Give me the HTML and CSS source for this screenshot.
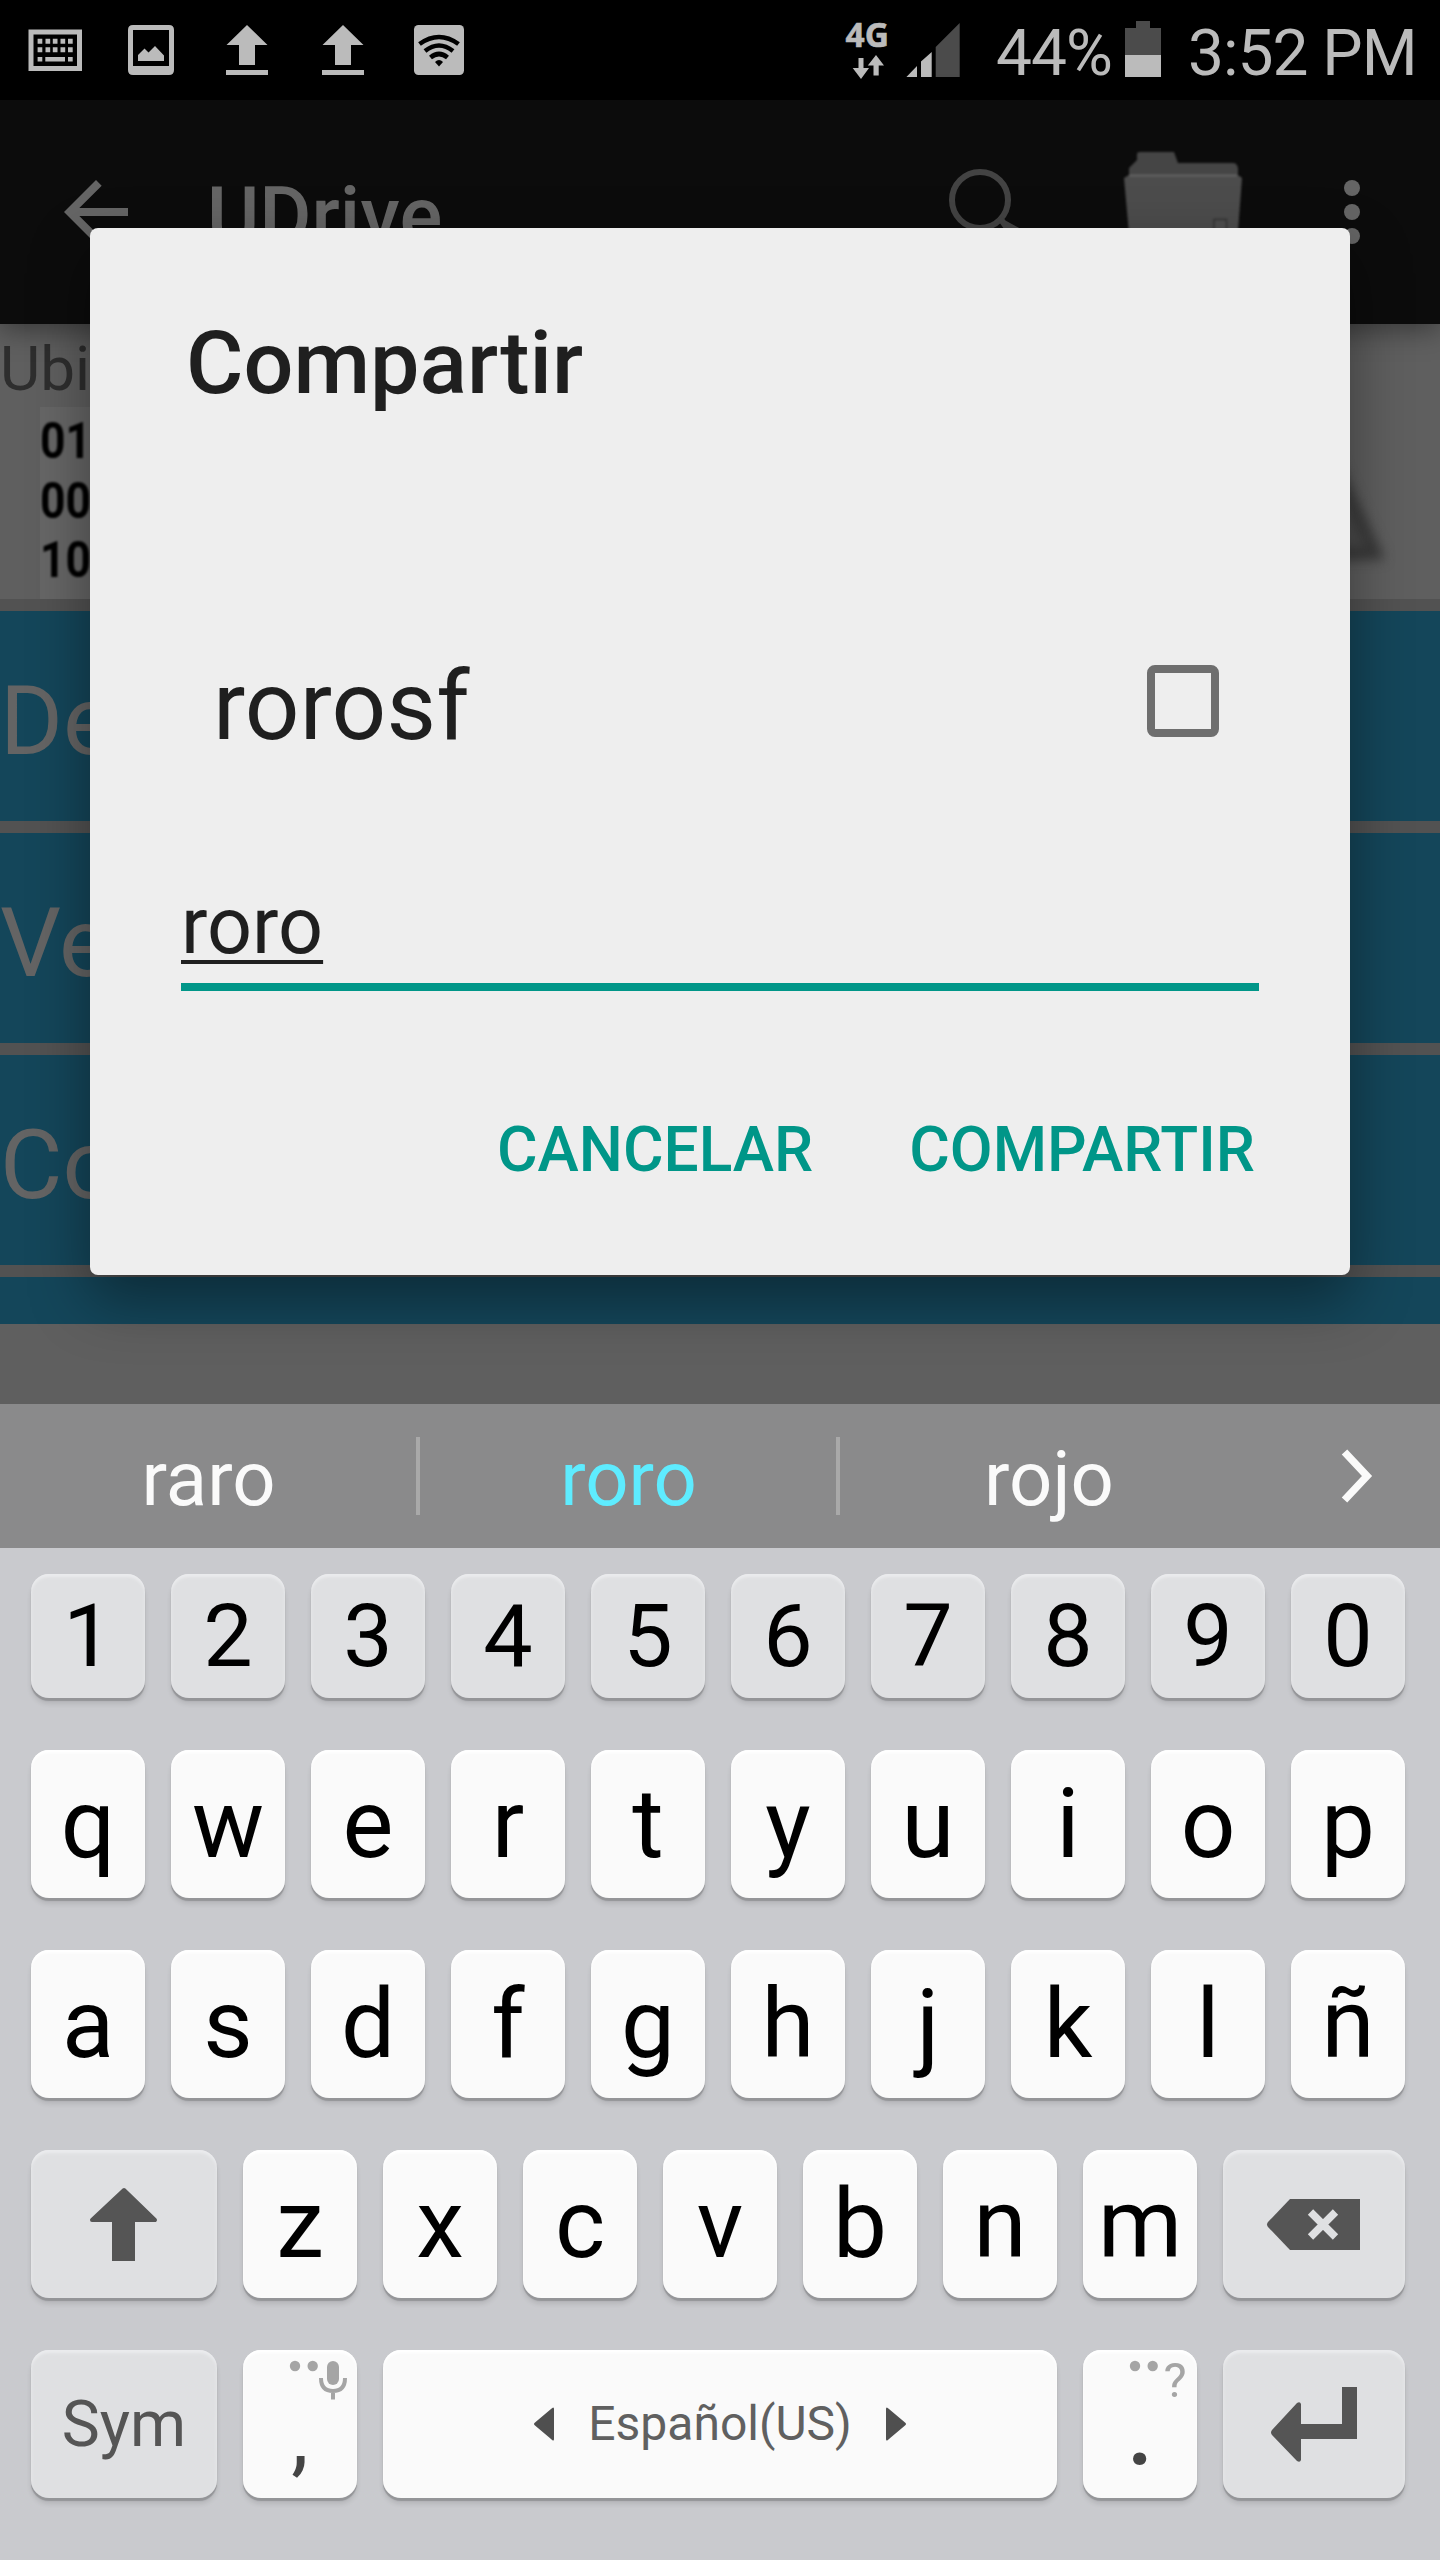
FILE: index.html
```html
<!DOCTYPE html>
<html lang="es">
<head>
<meta charset="utf-8">
<title>UDrive</title>
<link rel="stylesheet" href="styles.css">
</head>
<body>
<div class="screen">
  <header class="status">
    <div class="status-left">
      <svg class="status-icon" viewBox="-48 0 96 100">
        <path fill-rule="evenodd" d="M-26.500 29.500H27V71H-26.500ZM-21.500 34.500V66H22V34.500Z"/>
        <path d="M-17.400 38.700h4.700v5h-4.700zM-9.500 38.700h4.700v5h-4.700zM-2.200 38.700h4.700v5h-4.700zM5.500 38.700h4.700v5h-4.700zM13 38.700h4.700v5h-4.700zM-17.400 47.300h4.700v5h-4.700zM-9.500 47.300h4.700v5h-4.700zM-2.200 47.300h4.700v5h-4.700zM5.500 47.300h4.700v5h-4.700zM13 47.300h4.700v5h-4.700zM-17.400 57h4.700v4.600h-4.700zM-9.700 57H10v4.600H-9.700zM13 57h4.700v4.600h-4.700z"/>
      </svg>
      <svg class="status-icon" viewBox="-48 0 96 100">
        <path fill-rule="evenodd" d="M-18 25H18Q23 25 23 30V70Q23 75 18 75H-18Q-23 75-23 70V30Q-23 25-18 25ZM-18 30V66H18V30Z"/>
        <path d="M-13 61V55L-6.500 48.500-2.500 52.500 4 46 13 55.500V61Z"/>
      </svg>
      <svg class="status-icon" viewBox="-48 0 96 100"><path d="M0 25 20.500 45H8V65H-8V45H-20.500ZM-21 70H21V75H-21Z"/></svg>
      <svg class="status-icon" viewBox="-48 0 96 100"><path d="M0 25 20.500 45H8V65H-8V45H-20.500ZM-21 70H21V75H-21Z"/></svg>
      <svg class="status-icon" viewBox="-48 0 96 100">
        <rect x="-25" y="25" width="50" height="50" rx="4.500"/>
        <g class="wifi-arcs"><path d="M-19.500 44Q0 30 19.500 44"/><path d="M-14 51Q0 40 14 51"/><path d="M-8.500 57.500Q0 50.500 8.500 57.500"/></g>
        <path class="wifi-dot" d="M-4 62Q0 58 4 62L0 66.500Z"/>
      </svg>
    </div>
    <div class="status-right">
      <svg class="network" viewBox="840 0 125 100">
        <text x="845.500" y="47.300">4G</text>
        <path d="M858.500 58h5v10h5.500L861 79 852.700 68h5.800zM876 55l8 10.500h-5.300V75.500h-5.200V65.500h-5.700z"/>
        <path d="M917 66V77H906.400ZM931.700 52V77H921V61.500Z"/>
        <path class="dim" d="M959.700 23V77H935.700V47Z"/>
      </svg>
      <span class="percent">44%</span>
      <svg class="battery" viewBox="1125 0 36 100"><path class="dim" d="M1136 21h14v7h11v27h-36V28h11z"/><path d="M1125 55h36v22h-36z"/></svg>
      <span class="clock">3:52 PM</span>
    </div>
  </header>

  <main class="app">
    <div class="appbar">
      <svg class="back" viewBox="0 0 24 24"><path d="M20 11H7.830l5.590-5.590L12 4l-8 8 8 8 1.410-1.410L7.830 13H20z"/></svg>
      <h1 class="app-title">UDrive</h1>
      <svg class="search" viewBox="940 140 90 110"><circle cx="980" cy="200" r="28"/><path d="M1000 218 1007 228M1004 223 1022 233"/></svg>
      <svg class="folder" viewBox="1114 140 140 110">
        <path class="folder-back" d="M1129 177V168L1137 160V154Q1137 152 1140 152H1174L1178 163H1233Q1237 163 1238 168V177Z"/>
        <path d="M1129 175H1238L1242 178 1237 245H1130L1124 178Z"/>
        <path class="folder-edge" d="M1129 175.500H1237"/>
        <path class="folder-tag" d="M1214 240V219.500H1226.500V240"/>
      </svg>
      <svg class="more" viewBox="1342 140 20 110"><circle cx="1352" cy="188" r="8"/><circle cx="1352" cy="212" r="8"/><circle cx="1352" cy="236" r="8"/></svg>
    </div>
    <section class="location">
      <p class="location-label">Ubi</p>
      <div class="thumbs">
        <div class="binary"><span>01</span><span>00</span><span>10</span></div>
        <svg class="triangle" viewBox="1283 407 100 192"><path d="M1318 430 1376 554H1260Z"/></svg>
      </div>
    </section>
    <ul class="menu">
      <li>De</li>
      <li>Ve</li>
      <li>Co</li>
      <li class="cut"></li>
    </ul>
  </main>

  <section class="dialog">
    <h2 class="dialog-title">Compartir</h2>
    <label class="option"><span>rorosf</span><i class="checkbox"></i></label>
    <div class="field"><span>roro</span></div>
    <div class="actions"><button>CANCELAR</button><button>COMPARTIR</button></div>
  </section>

  <section class="keyboard">
    <div class="suggestions">
      <span>raro</span><span class="picked">roro</span><span>rojo</span>
      <svg class="chevron" viewBox="1332 1440 48 72"><path d="M1345.500 1452 1368 1476 1345.500 1500"/></svg>
    </div>
    <div class="keys">
      <div class="row numbers"><b>1</b><b>2</b><b>3</b><b>4</b><b>5</b><b>6</b><b>7</b><b>8</b><b>9</b><b>0</b></div>
      <div class="row"><b>q</b><b>w</b><b>e</b><b>r</b><b>t</b><b>y</b><b>u</b><b>i</b><b>o</b><b>p</b></div>
      <div class="row"><b>a</b><b>s</b><b>d</b><b>f</b><b>g</b><b>h</b><b>j</b><b>k</b><b>l</b><b>ñ</b></div>
      <div class="row">
        <b class="fn wide"><svg class="key-art wide-art" viewBox="31 2150 186 148"><path stroke-width="4" stroke-linejoin="round" d="M124 2190 155 2220H92Z"/><path d="M112 2218H135V2261H112Z"/></svg></b>
        <b>z</b><b>x</b><b>c</b><b>v</b><b>b</b><b>n</b><b>m</b>
        <b class="fn"><svg class="key-art" viewBox="1223 2150 182 148"><path d="M1290 2199H1360V2250H1290L1268 2227Q1266 2224.500 1268 2222Z"/><path class="cross" d="M1310.500 2212 1335.500 2237M1335.500 2212 1310.500 2237"/></svg></b>
      </div>
      <div class="row">
        <b class="fn wide sym">Sym</b>
        <b class="punct">,<svg class="hint" viewBox="243 2350 114 60"><circle cx="295" cy="2366" r="5.200"/><circle cx="312.700" cy="2366" r="5.200"/><rect x="327" y="2361" width="12" height="24" rx="6"/><path class="mic-cup" d="M321 2378Q321 2391 333 2391T345 2378M333 2391V2399.500"/></svg></b>
        <b class="space"><svg class="arrow" viewBox="0 0 22 34"><path d="M21 2V32Q21 35 18 32L2 18.500Q0 17 2 15.500L18 2Q21-1 21 2Z"/></svg><span>Español(US)</span><svg class="arrow" viewBox="0 0 22 34"><path d="M1 2V32Q1 35 4 32L20 18.500Q22 17 20 15.500L4 2Q1-1 1 2Z"/></svg></b>
        <b class="punct stop">.<svg class="hint" viewBox="1083 2350 114 60"><circle cx="1135" cy="2366" r="5.200"/><circle cx="1152.700" cy="2366" r="5.200"/><text x="1163.500" y="2396.500">?</text></svg></b>
        <b class="fn"><svg class="key-art" viewBox="1223 2350 182 148"><path d="M1342 2387H1357V2439H1301V2460Q1300 2463 1297 2461L1272 2435Q1270 2432.500 1272 2430L1297 2403Q1300 2401 1301 2404V2424H1342Z"/></svg></b>
      </div>
    </div>
  </section>
</div>
</body>
</html>
```
FILE: styles.css
```css
* { box-sizing: border-box; margin: 0; padding: 0; }
body { background: #000; font-family: Roboto, "Liberation Sans", sans-serif; }
svg { display: block; flex: none; }
.screen { position: relative; width: 1440px; height: 2560px; overflow: hidden; display: flex; flex-direction: column; }

/* status bar */
.status { height: 100px; background: #000; color: #bbb; display: flex; justify-content: space-between; font-size: 64px; line-height: 107px; }
.status svg { fill: #bbb; }
.status-left, .status-right { display: flex; }
.status-left { padding-left: 7px; }
.status-icon { width: 96px; height: 100px; }
.status .wifi-arcs { fill: none; stroke: #000; stroke-width: 4.6; }
.status .wifi-dot { fill: #000; }
.network { width: 125px; height: 100px; }
.network text { font: 700 33.5px "Noto Sans", sans-serif; stroke: #bbb; stroke-width: .6; }
.network .dim, .battery .dim { fill: #4b4b4b; }
.percent { width: 129px; margin-left: 31px; letter-spacing: -1px; }
.battery { width: 36px; height: 100px; }
.clock { width: 252px; margin-left: 27px; white-space: nowrap; letter-spacing: -1px; }

/* dimmed app behind the dialog */
.app { height: 1304px; background: #5f5f5f; }
.appbar { position: relative; z-index: 1; height: 224px; background: #0c0c0c; box-shadow: 0 6px 26px rgba(0, 0, 0, .4); display: flex; padding: 40px 78px 0 48px; }
.back { width: 96px; height: 96px; margin-top: 24px; fill: #656565; }
.app-title { margin-left: 63px; flex: 1; font-size: 80px; font-weight: 500; line-height: 152px; color: #656565; }
.search { width: 90px; height: 110px; fill: none; stroke: #434343; stroke-width: 6; filter: blur(.6px); }
.folder { width: 140px; height: 110px; margin-left: 84px; fill: #4c4c4c; filter: blur(1px); }
.folder-back { fill: #454545; }
.folder-edge { stroke: #636363; stroke-width: 2; }
.folder-tag { fill: #4e4e4e; stroke: #333; stroke-width: 1.5; }
.more { width: 20px; height: 110px; margin-left: 88px; fill: #656565; }
.location { height: 287px; border-bottom: 12px solid #525252; overflow: hidden; }
.location-label { height: 83px; font-size: 62px; line-height: 90px; color: #2e2e2e; }
.thumbs { display: flex; justify-content: space-between; padding: 0 57px 0 40px; }
.binary { width: 220px; height: 192px; padding-top: 5px; background: #666; color: #000; font: 700 50px/59.5px Roboto, sans-serif; }
.binary span { display: block; filter: blur(1px); transform: scaleX(.89); transform-origin: 0 0; }
.triangle { width: 100px; height: 192px; fill: #4c4c4c; stroke: #383838; stroke-width: 12; filter: blur(6px); }
.menu { list-style: none; font-size: 96px; line-height: 220px; color: #646464; }
.menu li { height: 222px; background: #14465a; border-bottom: 12px solid #525252; overflow: hidden; }
.menu .cut { height: 47px; border: 0; }

/* dialog */
.dialog { position: absolute; z-index: 2; left: 90px; top: 228px; width: 1260px; height: 1047px; padding: 85px 91px 0; border-radius: 8px; background: #eee; color: #1f1f1f; box-shadow: 0 24px 60px rgba(0, 0, 0, .4); display: flex; flex-direction: column; }
.dialog-title { padding-left: 5px; font-size: 88px; font-weight: 500; line-height: 100px; }
.option { height: 144px; margin-top: 216px; padding: 0 40px 0 32px; display: flex; align-items: center; justify-content: space-between; font-size: 96px; line-height: 144px; }
.option span { padding-top: 9px; letter-spacing: .2px; }
.checkbox { width: 72px; height: 72px; border: 8px solid #6e6e6e; border-radius: 8px; }
.field { height: 114px; margin-top: 104px; border-bottom: 8px solid #009688; font-size: 79px; line-height: 99px; }
.field span { text-decoration: underline; text-decoration-thickness: 4px; text-underline-offset: 7px; text-decoration-skip-ink: none; }
.actions { display: flex; justify-content: flex-end; gap: 96px; margin-top: 109px; padding-right: 4px; }
.actions button { border: 0; background: none; color: #009688; font: 500 62.2px/100px Roboto, sans-serif; }

/* keyboard */
.keyboard { position: relative; height: 1156px; background: #c9cace; }
.suggestions { height: 144px; display: flex; background: #8a8a8b; color: #fafafa; font-size: 76px; line-height: 150px; text-align: center; }
.suggestions span { width: 420px; padding-right: 3px; background: linear-gradient(#a9a9a9, #a9a9a9) right 33px / 4px 78px no-repeat; }
.suggestions span:nth-child(3) { background: none; padding-right: 2px; }
.suggestions .picked { color: #5eecff; }
.chevron { width: 48px; height: 72px; margin: 36px 0 0 71px; fill: none; stroke: #fafafa; stroke-width: 7.5; }
.keys { padding: 26px 35px 0 31px; display: flex; flex-direction: column; gap: 52px; }
.row { display: flex; gap: 26px; height: 148px; font-size: 96px; line-height: 148px; }
.row b { position: relative; width: 114px; border-radius: 18px; background: #fafafa; color: #000; font-weight: 400; text-align: center; box-shadow: 0 3px 1px #949598, 0 6px 5px rgba(0, 0, 0, .1), inset 0 3px 3px #fff; }
.numbers { height: 124px; font-size: 88px; line-height: 124px; }
.numbers b, .row .fn { background: #dfe0e2; box-shadow: 0 3px 1px #949598, 0 6px 5px rgba(0, 0, 0, .1), inset 0 3px 3px #ebecee; }
.row .fn { width: 182px; color: #555; }
.row .wide { width: 186px; }
.row .sym { font-size: 64px; line-height: 149px; }
.key-art { width: 182px; height: 148px; fill: #555; stroke: none; }
.wide-art { width: 186px; }
.wide-art path:first-child { stroke: #555; }
.key-art .cross { stroke: #dfe0e2; stroke-width: 7.5; }
.row .punct { color: #444; font-size: 88px; line-height: 170px; }
.row .stop { font-size: 96px; line-height: 163px; font-weight: 500; }
.hint { position: absolute; left: 0; top: 0; width: 114px; height: 60px; fill: #a5a5a5; }
.hint text { font: 400 49px Roboto, sans-serif; }
.hint .mic-cup { fill: none; stroke: #a5a5a5; stroke-width: 4; }
.row .space { width: 674px; color: #606060; font-size: 48px; display: flex; justify-content: center; align-items: center; gap: 33px; }
.arrow { width: 22px; height: 34px; fill: #4f4f4f; }
```
